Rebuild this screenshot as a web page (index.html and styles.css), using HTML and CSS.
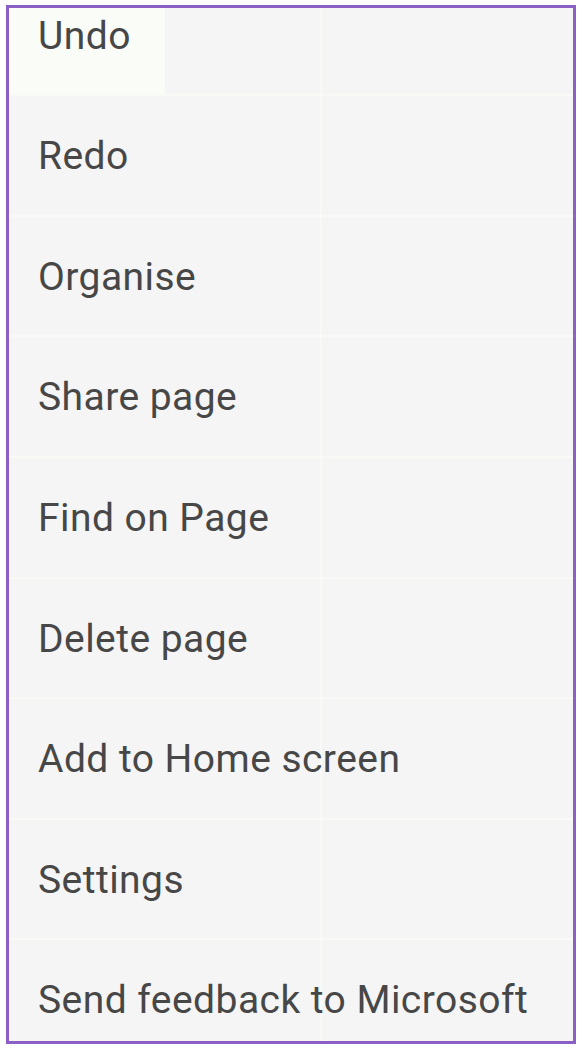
FILE: index.html
```html
<!DOCTYPE html>
<html lang="en">
<head>
<meta charset="utf-8">
<title>Menu</title>
<link rel="stylesheet" href="styles.css">
</head>
<body>
<div class="panel">
  <ul class="menu">
    <li class="item first">Undo</li>
    <li class="item">Redo</li>
    <li class="item">Organise</li>
    <li class="item">Share page</li>
    <li class="item">Find on Page</li>
    <li class="item">Delete page</li>
    <li class="item">Add to Home screen</li>
    <li class="item">Settings</li>
    <li class="item">Send feedback to Microsoft</li>
  </ul>
</div>
</body>
</html>
```
FILE: styles.css
```css
html, body {
  margin: 0;
  padding: 0;
  background: #ffffff;
}
body {
  padding: 5px 0 0 6px;
}
.panel {
  box-sizing: border-box;
  width: 570px;
  height: 1039px;
  border: 3px solid #8b5fc4;
  background: #f5f5f5;
  overflow: hidden;
}
.menu {
  list-style: none;
  margin: -32.3px 0 0 0;
  padding: 0;
  background: linear-gradient(to right, transparent 311px, #f9faf6 311px, #f9faf6 313px, transparent 313px);
}
.item {
  box-sizing: border-box;
  height: 120.6px;
  line-height: 120.6px;
  padding-left: 29px;
  font-family: Roboto, "Liberation Sans", sans-serif;
  font-size: 39px;
  letter-spacing: 0.45px;
  color: #474747;
  white-space: nowrap;
  border-bottom: 2px solid #f9faf6;
}
.first {
  background: linear-gradient(to right, #fafcf7 156px, transparent 156px);
}
```
